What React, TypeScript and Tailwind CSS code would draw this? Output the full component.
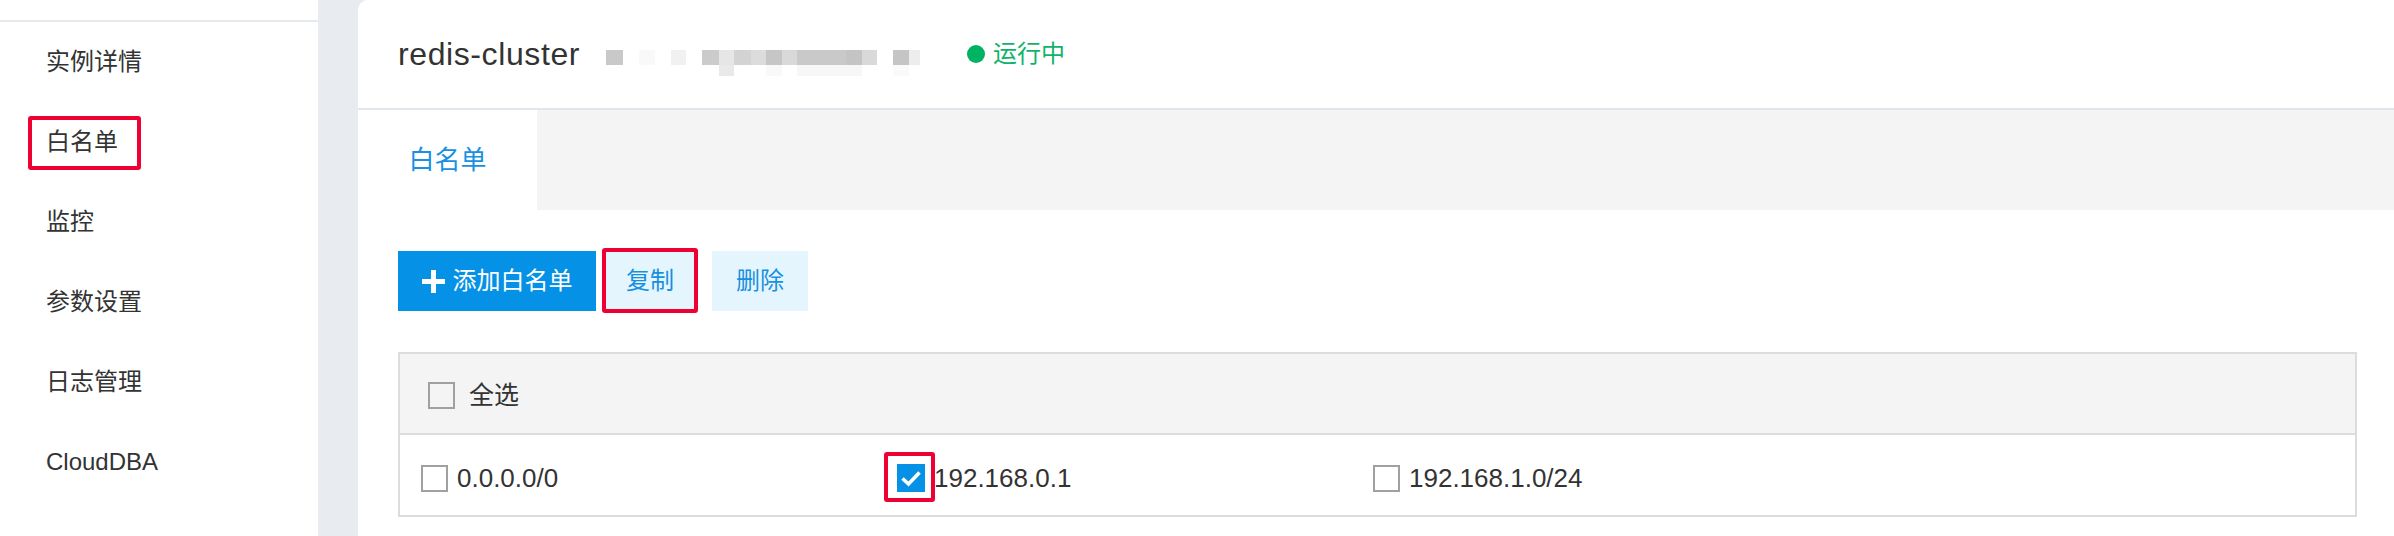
import React from "react";

const sideItems = ["实例详情", "白名单", "监控", "参数设置", "日志管理", "CloudDBA"];

// pixelated (redacted) instance id, top row then bottom row
const blurTop = [
  "w-[17px] bg-[#c9c9c9]",
  "w-[16px]",
  "w-[16px] bg-[#f9f9f9]",
  "w-[16px]",
  "w-[15px] bg-[#f1f1f1]",
  "w-[16px]",
  "w-[17px] bg-[#cbcbcb]",
  "w-[15px] bg-[#e6e6e6]",
  "w-[17px] bg-[#d3d3d3]",
  "w-[15px] bg-[#dcdcdc]",
  "w-[16px] bg-[#c6c6c6]",
  "w-[15px] bg-[#d9d9d9]",
  "w-[49px] bg-[#c9c9c9]",
  "w-[16px] bg-[#c4c4c4]",
  "w-[15px] bg-[#d9d9d9]",
  "w-[16px]",
  "w-[16px] bg-[#c5c5c5]",
  "w-[11px] bg-[#ededed]",
];

const blurBottom = [
  "w-[113px]",
  "w-[15px] bg-[#e9e9e9]",
  "w-[32px]",
  "w-[16px] bg-[#f9f9f9]",
  "w-[15px]",
  "w-[65px] bg-[#f7f7f7]",
  "w-[31px]",
  "w-[16px] bg-[#fafafa]",
];

const ips = [
  { ip: "0.0.0.0/0", checked: false },
  { ip: "192.168.0.1", checked: true },
  { ip: "192.168.1.0/24", checked: false },
];

function CheckBox({ checked }: { checked?: boolean }) {
  if (checked) {
    return (
      <span className="flex h-[28px] w-[28px] shrink-0 items-center justify-center bg-[#0592e6]">
        <svg width="28" height="28" viewBox="0 0 28 28">
          <path d="M5.5 14.5 L11.5 20 L22.5 8.5" stroke="#fff" strokeWidth="3.6" fill="none" />
        </svg>
      </span>
    );
  }
  return <span className="h-[27px] w-[27px] shrink-0 border-2 border-[#a0a0a0]" />;
}

function RedMark({ className }: { className: string }) {
  return <span className={"pointer-events-none absolute rounded-[3px] border-4 border-[#ef0033] " + className} />;
}

export default function App() {
  return (
    <div className="flex h-[536px] w-[2394px] overflow-hidden bg-[#e8ecf0] font-['Liberation_Sans','Noto_Sans_CJK_SC',sans-serif] text-[#333]">
      {/* ================= SIDEBAR ================= */}
      <aside className="w-[318px] shrink-0 bg-white pt-[20px]">
        <div className="border-t-2 border-[#e6eaee]">
          {sideItems.map((item) => (
            <div key={item} className="flex h-[80px] items-center pl-[46px] text-[24px] leading-[24px]">
              {item === "白名单" ? (
                <span className="relative">
                  {item}
                  <RedMark className="-top-[14px] -bottom-[16px] -left-[18px] -right-[23px]" />
                </span>
              ) : (
                <span>{item}</span>
              )}
            </div>
          ))}
        </div>
      </aside>

      {/* ================= MAIN CARD ================= */}
      <main className="ml-[40px] flex-1 rounded-tl-[10px] bg-white">
        {/* header */}
        <div className="flex h-[110px] items-center border-b-2 border-[#e1e6eb] pl-[40px]">
          <h1 className="text-[32px] tracking-[0.6px]">redis-cluster</h1>

          <div className="ml-[26px] mt-[18px] flex flex-col">
            <div className="flex h-[15px]">
              {blurTop.map((c, i) => (
                <span key={i} className={c} />
              ))}
            </div>
            <div className="flex h-[11px]">
              {blurBottom.map((c, i) => (
                <span key={i} className={c} />
              ))}
            </div>
          </div>

          <div className="ml-[47px] flex items-center gap-[8px] text-[24px] text-[#13b26b]">
            <span className="h-[18px] w-[18px] rounded-full bg-[#00b362]" />
            运行中
          </div>
        </div>

        {/* tabs */}
        <div className="flex h-[100px] bg-[#f4f4f4]">
          <div className="flex w-[179px] items-center justify-center bg-white text-[26px] text-[#1a90e2]">
            白名单
          </div>
        </div>

        {/* content */}
        <div className="pl-[40px] pr-[37px] pt-[41px]">
          <div className="flex h-[60px] text-[24px]">
            <button className="flex w-[198px] items-center justify-center gap-[8px] bg-[#0592e6] text-white">
              <svg width="23" height="23" viewBox="0 0 23 23">
                <rect x="9" y="0" width="5" height="23" fill="#fff" />
                <rect x="0" y="9" width="23" height="5" fill="#fff" />
              </svg>
              添加白名单
            </button>
            <button className="relative ml-[6px] flex w-[96px] items-center justify-center bg-[#e5f5fd] text-[#1890e0]">
              复制
              <RedMark className="-top-[3px] -bottom-[2px] left-0 right-0" />
            </button>
            <button className="ml-[14px] flex w-[96px] items-center justify-center bg-[#e5f5fd] text-[#1890e0]">
              删除
            </button>
          </div>

          <div className="mt-[41px] border-2 border-[#dcdcdc]">
            <div className="flex h-[81px] items-center border-b-2 border-[#dcdcdc] bg-[#f4f4f4] pl-[28px] pt-[4px]">
              <CheckBox />
              <span className="ml-[14px] text-[25px]">全选</span>
            </div>
            <div className="flex h-[80px] items-center pl-[21px] pt-[6px]">
              {ips.map((row) => (
                <div key={row.ip} className="flex w-[476px] shrink-0 items-center">
                  {row.checked ? (
                    <span className="relative">
                      <CheckBox checked />
                      <RedMark className="-top-[12px] -bottom-[10px] -left-[13px] -right-[10px]" />
                    </span>
                  ) : (
                    <CheckBox />
                  )}
                  <span className="ml-[9px] text-[26px]">{row.ip}</span>
                </div>
              ))}
            </div>
          </div>
        </div>
      </main>
    </div>
  );
}
